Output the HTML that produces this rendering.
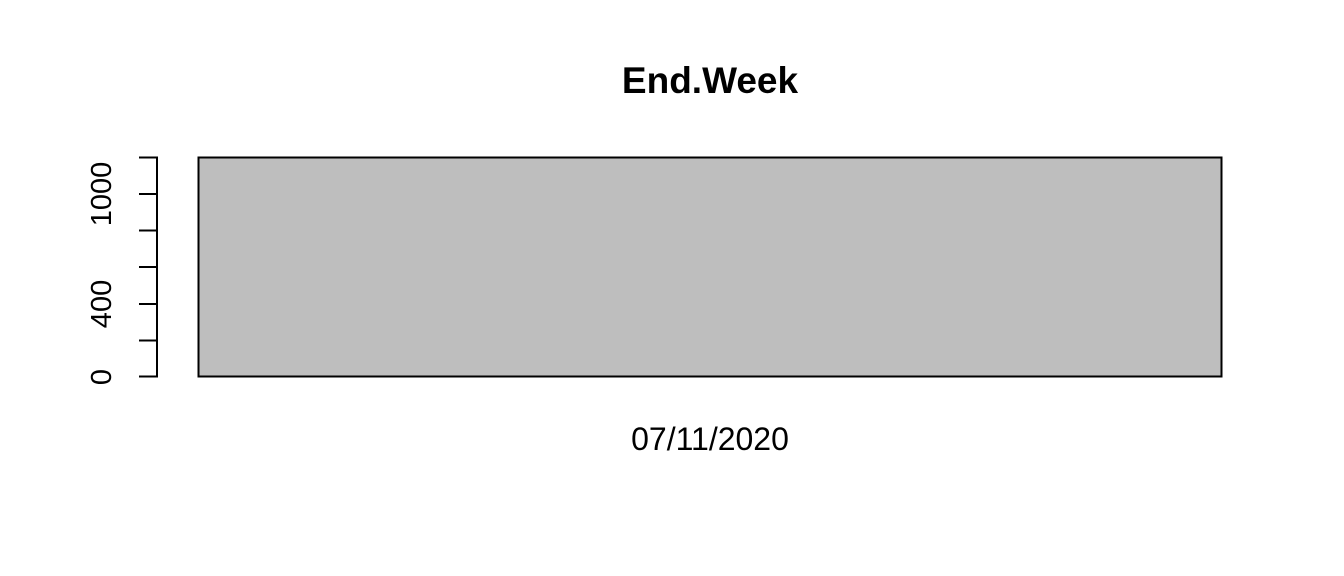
<!DOCTYPE html>
<html><head><style>html,body{margin:0;padding:0;background:#fff}svg{display:block}</style></head>
<body>
<svg width="1344" height="576" xmlns="http://www.w3.org/2000/svg" font-family="Liberation Sans, Arial, sans-serif">
<rect width="1344" height="576" fill="#fff"/>
<text x="710" y="93" font-size="37" font-weight="bold" text-anchor="middle">End.Week</text>
<rect x="198.5" y="157.5" width="1023" height="219" fill="#bebebe" stroke="#000" stroke-width="2"/>
<g stroke="#000" stroke-width="2">
<line x1="157" y1="156.5" x2="157" y2="377.5"/>
<line x1="139" y1="157.5" x2="157" y2="157.5"/>
<line x1="139" y1="194" x2="157" y2="194"/>
<line x1="139" y1="230.5" x2="157" y2="230.5"/>
<line x1="139" y1="267" x2="157" y2="267"/>
<line x1="139" y1="304" x2="157" y2="304"/>
<line x1="139" y1="340.5" x2="157" y2="340.5"/>
<line x1="139" y1="376.5" x2="157" y2="376.5"/>
</g>
<g font-size="29" text-anchor="middle">
<text transform="translate(111,377) rotate(-90)">0</text>
<text transform="translate(111,304) rotate(-90)">400</text>
<text transform="translate(111,194) rotate(-90)">1000</text>
</g>
<text x="710" y="450" font-size="32" text-anchor="middle">07/11/2020</text>
</svg>
</body></html>
